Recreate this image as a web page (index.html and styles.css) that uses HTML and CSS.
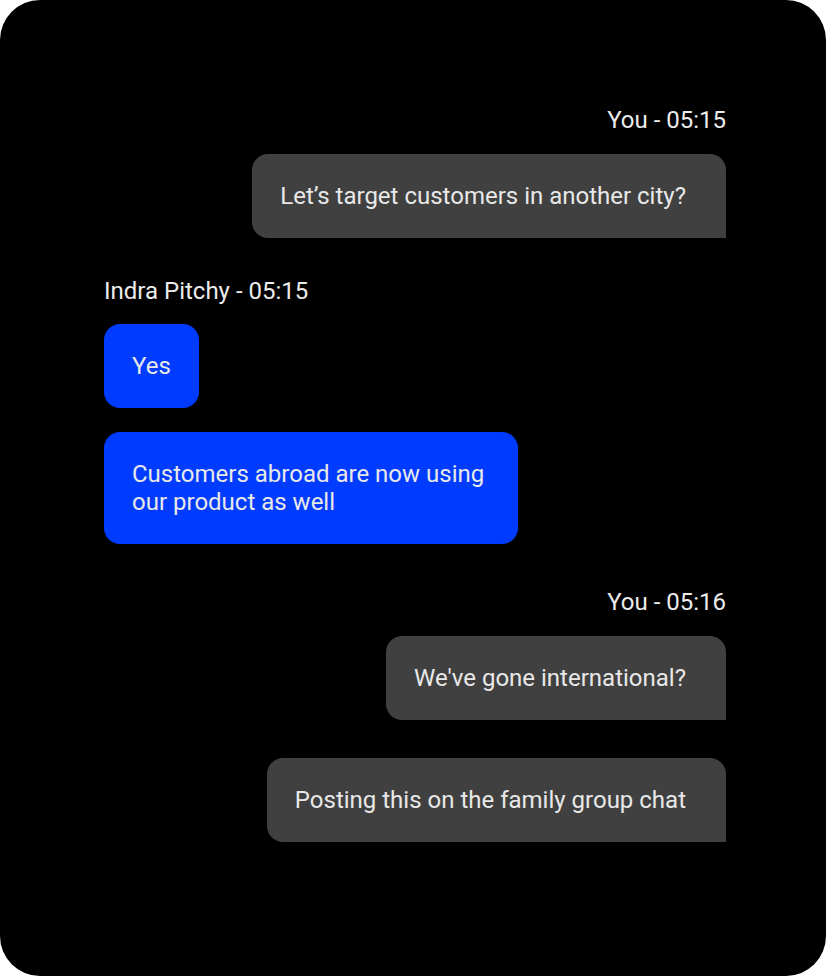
FILE: index.html
```html
<!DOCTYPE html>
<html lang="en">
<head>
  <meta charset="UTF-8" />
  <meta name="viewport" content="width=device-width, initial-scale=1" />
  <title>Chat</title>
  <link rel="stylesheet" href="styles.css">
</head>
<body>

<div class="chat">

  <div class="group outgoing">
    <div class="meta">You - 05:15</div>
    <div class="bubble">Let’s target customers in another city?</div>
  </div>

  <div class="group incoming">
    <div class="meta">Indra Pitchy - 05:15</div>
    <div class="bubble">Yes</div>
    <div class="bubble">Customers abroad are now using our product as well</div>
  </div>

  <div class="group outgoing">
    <div class="meta">You - 05:16</div>
    <div class="bubble">We've gone international?</div>
    <div class="bubble">Posting this on the family group chat</div>
  </div>

</div>

</body>
</html>
```

FILE: styles.css
```css
body {
  margin: 0;
  background: #fff;
  font-family: Roboto, "Liberation Sans", sans-serif;
}
.chat {
  box-sizing: border-box;
  height: 976px;
  background: #000;
  border-radius: 40px;
  padding: 106px 100px 0 104px;
  display: flex;
  flex-direction: column;
  gap: 39px;
}
.group {
  display: flex;
  flex-direction: column;
  gap: 24px;
}
.meta {
  color: #ececec;
  font-size: 24px;
  line-height: 28px;
  margin-bottom: -5px;
}
.bubble {
  color: #e8e8e8;
  font-size: 24px;
  line-height: 28px;
  padding: 28px 40px 28px 28px;
  border-radius: 16px;
}
.outgoing {
  align-items: flex-end;
  gap: 38px;
}
.outgoing .meta {
  margin-bottom: -18px;
}
.outgoing .bubble {
  background: #404040;
  border-bottom-right-radius: 0;
}
.incoming {
  align-items: flex-start;
  margin-bottom: 5px;
}
.incoming .bubble {
  background: #003cff;
  max-width: 358px;
  padding-right: 28px;
}
```
